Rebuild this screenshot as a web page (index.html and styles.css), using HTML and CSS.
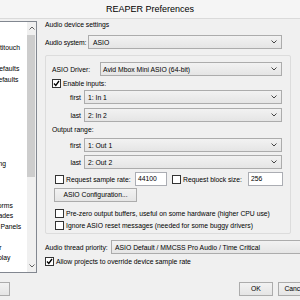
FILE: index.html
```html
<!DOCTYPE html>
<html lang="en">
<head>
    <meta charset="UTF-8">
    <title>REAPER Preferences</title>
    <link rel="stylesheet" href="styles.css">
</head>
<body>
    <div class="title">REAPER Preferences</div>
    <div class="main">
        <div class="tree">
            <div class="tree-list">
                <div class="nodes">
                    <div class="node">General</div>
                    <div class="node sub">Paths</div>
                    <div class="node sub">Keyboard/Multitouch</div>
                    <div class="node">Project</div>
                    <div class="node sub">Track/Send Defaults</div>
                    <div class="node sub">Media Item Defaults</div>
                    <div class="node">Audio</div>
                    <div class="node sub">Device</div>
                    <div class="node sub">MIDI Devices</div>
                    <div class="node sub">Buffering</div>
                    <div class="node sub">Mute/Solo</div>
                    <div class="node sub">Playback</div>
                    <div class="node sub">Recording</div>
                    <div class="node sub">Loop Recording</div>
                    <div class="node sub">Rendering</div>
                    <div class="node">Appearance</div>
                    <div class="node sub">Media</div>
                    <div class="node sub">Peaks/Waveforms</div>
                    <div class="node sub">Fades/Crossfades</div>
                    <div class="node sub">Track Control Panels</div>
                    <div class="node sub">Zoom/Scroll</div>
                    <div class="node">Editing Behavior</div>
                    <div class="node sub">Envelope Display</div>
                    <div class="node sub">Automation</div>
                </div>
            </div>
            <div class="scroll">
                <div class="arrow"><svg width="6" height="4"><polyline points="0.5,3.5 3,1 5.5,3.5" fill="none" stroke="#606060" stroke-width="1"/></svg></div>
                <div class="track"><div class="thumb"></div></div>
                <div class="arrow"><svg width="6" height="4"><polyline points="0.5,0.5 3,3 5.5,0.5" fill="none" stroke="#606060" stroke-width="1"/></svg></div>
            </div>
        </div>
        <div class="divider"></div>
        <div class="page">
            <div class="heading">Audio device settings</div>
            <div class="field sys">
                <span class="lbl w-sys">Audio system:</span>
                <div class="combo w-194">ASIO<svg width="6" height="4"><polyline points="0.5,0.5 3,3 5.5,0.5" fill="none" stroke="#444" stroke-width="1"/></svg></div>
            </div>
            <div class="group">
                <div class="field">
                    <span class="lbl w-drv">ASIO Driver:</span>
                    <div class="combo w-182">Avid Mbox Mini ASIO (64-bit)<svg width="6" height="4"><polyline points="0.5,0.5 3,3 5.5,0.5" fill="none" stroke="#444" stroke-width="1"/></svg></div>
                </div>
                <div class="check mt3">
                    <span class="box"><svg width="7" height="7"><polyline points="1,3.5 2.8,5.5 6,1" fill="none" stroke="#000" stroke-width="1.3"/></svg></span>
                    <span>Enable inputs:</span>
                </div>
                <div class="field mt2">
                    <span class="lbl w-rng">first</span>
                    <div class="combo w-198">1: In 1<svg width="6" height="4"><polyline points="0.5,0.5 3,3 5.5,0.5" fill="none" stroke="#444" stroke-width="1"/></svg></div>
                </div>
                <div class="field mt4">
                    <span class="lbl w-rng">last</span>
                    <div class="combo w-198">2: In 2<svg width="6" height="4"><polyline points="0.5,0.5 3,3 5.5,0.5" fill="none" stroke="#444" stroke-width="1"/></svg></div>
                </div>
                <div class="caption">Output range:</div>
                <div class="field mt4">
                    <span class="lbl w-rng">first</span>
                    <div class="combo w-198">1: Out 1<svg width="6" height="4"><polyline points="0.5,0.5 3,3 5.5,0.5" fill="none" stroke="#444" stroke-width="1"/></svg></div>
                </div>
                <div class="field mt3">
                    <span class="lbl w-rng">last</span>
                    <div class="combo w-198">2: Out 2<svg width="6" height="4"><polyline points="0.5,0.5 3,3 5.5,0.5" fill="none" stroke="#444" stroke-width="1"/></svg></div>
                </div>
                <div class="field mt3 request">
                    <div class="check">
                        <span class="box"></span>
                        <span class="w-rate">Request sample rate:</span>
                    </div>
                    <div class="edit w-32">44100</div>
                    <div class="check ml5">
                        <span class="box"></span>
                        <span class="w-block">Request block size:</span>
                    </div>
                    <div class="edit w-35">256</div>
                </div>
                <div class="btn config">ASIO Configuration...</div>
                <div class="check mt7 ml3">
                    <span class="box"></span>
                    <span>Pre-zero output buffers, useful on some hardware (higher CPU use)</span>
                </div>
                <div class="check mt3 ml3">
                    <span class="box"></span>
                    <span>Ignore ASIO reset messages (needed for some buggy drivers)</span>
                </div>
            </div>
            <div class="field prio">
                <span class="lbl w-prio">Audio thread priority:</span>
                <div class="combo w-200">ASIO Default / MMCSS Pro Audio / Time Critical</div>
            </div>
            <div class="check mt3">
                <span class="box"><svg width="7" height="7"><polyline points="1,3.5 2.8,5.5 6,1" fill="none" stroke="#000" stroke-width="1.3"/></svg></span>
                <span>Allow projects to override device sample rate</span>
            </div>
        </div>
    </div>
    <div class="bottom">
        <div class="btn find">Find</div>
        <div class="btn ok">OK</div>
        <div class="btn cancel">Cancel</div>
    </div>
</body>
</html>
```

FILE: styles.css
```css
body{
    margin: 0;
    width: 300px;
    height: 300px;
    overflow: hidden;
    background-color: #f0f0f0;
    color: #000;
    font: normal 6.8px "Liberation Sans", Arial, sans-serif;
}
.title{
    height: 18px;
    line-height: 18px;
    text-align: center;
    font-size: 9px;
    background-color: #f5f5f5;
    border-bottom: 1px solid #dadada;
}
.main{
    display: flex;
    margin-top: 2px;
    height: 252px;
}

/* tree on the left, scrolled so names are cut */
.tree{
    display: flex;
    width: 37px;
    background-color: #fff;
    border: 1px solid #828790;
    border-left: 0;
    box-sizing: border-box;
}
.tree-list{
    width: 27px;
    overflow: hidden;
}
.nodes{
    margin-left: -48px;
    white-space: nowrap;
}
.node{
    height: 10.5px;
    line-height: 10.5px;
}
.node.sub{
    padding-left: 6px;
}
.scroll{
    width: 9px;
    display: flex;
    flex-direction: column;
    background-color: #f0f0f0;
}
.arrow{
    height: 12px;
    display: flex;
    align-items: center;
    justify-content: center;
}
.track{
    flex: 1;
}
.thumb{
    margin: 1px 1px 0 0;
    height: 142px;
    background-color: #cdcdcd;
}
.divider{
    width: 1px;
    margin-left: 2px;
    background-color: #d9d9d9;
}

/* settings page */
.page{
    flex: 1;
    padding-left: 6px;
    display: flex;
    flex-direction: column;
}
.heading{
    line-height: 8px;
}
.field{
    display: flex;
    align-items: center;
}
.sys{
    margin-top: 6px;
}
.lbl{
    flex: none;
    white-space: nowrap;
}
.w-sys{ width: 43px; letter-spacing: -0.1px; }
.w-drv{ width: 48px; }
.w-rng{ width: 29px; margin-right: 3px; text-align: right; }
.w-prio{ width: 66px; }
.w-rate{ width: 69px; }
.w-block{ width: 65px; }

.combo{
    flex: none;
    height: 14px;
    box-sizing: border-box;
    padding: 0 4px 0 4px;
    display: flex;
    align-items: center;
    justify-content: space-between;
    white-space: nowrap;
    border: 1px solid #acacac;
    background: linear-gradient(#f2f2f2, #e5e5e5);
}
.w-194{ width: 194px; }
.w-182{ width: 182px; padding-left: 2px; }
.w-198{ width: 198px; padding-left: 3px; }
.w-200{ width: 200px; padding-left: 3px; }

.edit{
    flex: none;
    height: 14px;
    line-height: 12px;
    box-sizing: border-box;
    padding-left: 2px;
    background-color: #fff;
    border: 1px solid #abadb3;
}
.w-32{ width: 32px; }
.w-35{ width: 35px; }

.group{
    margin-top: 6px;
    width: 246px;
    box-sizing: border-box;
    padding: 6px 0 3px 6px;
    border: 1px solid #dcdcdc;
    border-radius: 2px;
}
.caption{
    margin-top: 4px;
    line-height: 8px;
}
.check{
    display: flex;
    align-items: center;
    white-space: nowrap;
    height: 9px;
}
.box{
    flex: none;
    width: 9px;
    height: 9px;
    box-sizing: border-box;
    margin-right: 2px;
    border: 1px solid #333;
    background-color: #fff;
    display: flex;
}
.request .check:first-child{
    margin-left: 3px;
}
.mt2{ margin-top: 2px; }
.mt3{ margin-top: 3px; }
.mt4{ margin-top: 4px; }
.mt7{ margin-top: 7px; }
.ml3{ margin-left: 3px; }
.ml5{ margin-left: 5px; }

.btn{
    height: 14px;
    line-height: 12px;
    box-sizing: border-box;
    text-align: center;
    white-space: nowrap;
    border: 1px solid #acacac;
    background: linear-gradient(#f2f2f2, #e5e5e5);
}
.config{
    margin: 2px 0 0 2px;
    width: 83px;
}
.prio{
    margin-top: 6px;
}

.bottom{
    display: flex;
    padding-top: 9px;
}
.find{
    width: 34px;
    margin-left: -24px;
}
.ok{
    width: 34px;
    margin-left: auto;
}
.cancel{
    width: 34px;
    margin-left: 5px;
    margin-right: -12px;
    flex: none;
}
```
